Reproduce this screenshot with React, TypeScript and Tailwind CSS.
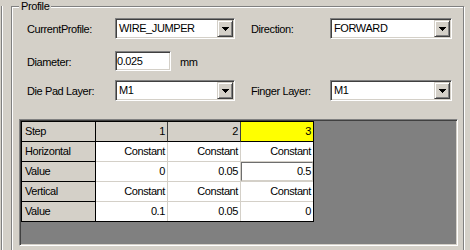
import React from "react";

const sunken =
  "border border-t-[#808080] border-l-[#808080] border-r-white border-b-white shadow-[inset_1px_1px_0_#404040,inset_-1px_-1px_0_#d4d0c8]";

function Arrow() {
  return (
    <svg width="7" height="4" viewBox="0 0 7 4" shapeRendering="crispEdges">
      <path d="M0 0h7v1H0zM1 1h5v1H1zM2 2h3v1H2zM3 3h1v1H3z" fill="#000" />
    </svg>
  );
}

function Combo({ value, width }: { value: string; width: string }) {
  return (
    <div className={`flex h-[21px] ${width} bg-white p-px ${sunken}`}>
      <span className="flex flex-1 items-center pl-[2px] leading-none">{value}</span>
      <div className="flex h-[17px] w-[16px] items-center justify-center border border-t-[#d4d0c8] border-l-[#d4d0c8] border-r-[#404040] border-b-[#404040] bg-[#d4d0c8] shadow-[inset_1px_1px_0_#ffffff,inset_-1px_-1px_0_#808080]">
        <Arrow />
      </div>
    </div>
  );
}

type Cell = { text: string; kind: "head" | "step" | "data" | "yellow" | "edit" };

const rows: Cell[][] = [
  [
    { text: "Step", kind: "head" },
    { text: "1", kind: "step" },
    { text: "2", kind: "step" },
    { text: "3", kind: "yellow" },
  ],
  [
    { text: "Horizontal", kind: "head" },
    { text: "Constant", kind: "data" },
    { text: "Constant", kind: "data" },
    { text: "Constant", kind: "data" },
  ],
  [
    { text: "Value", kind: "head" },
    { text: "0", kind: "data" },
    { text: "0.05", kind: "data" },
    { text: "0.5", kind: "edit" },
  ],
  [
    { text: "Vertical", kind: "head" },
    { text: "Constant", kind: "data" },
    { text: "Constant", kind: "data" },
    { text: "Constant", kind: "data" },
  ],
  [
    { text: "Value", kind: "head" },
    { text: "0.1", kind: "data" },
    { text: "0.05", kind: "data" },
    { text: "0", kind: "data" },
  ],
];

function TableCell({ cell, lastRow, lastCol, rowIdx }: { cell: Cell; lastRow: boolean; lastCol: boolean; rowIdx: number }) {
  const h = lastRow ? "h-[19px]" : "h-[20px] border-b";
  const r = lastCol ? "" : "border-r";
  if (cell.kind === "head") {
    return (
      <div className={`flex items-center bg-[#d4d0c8] pl-[3px] ${h} border-r border-black`}>
        {cell.text}
      </div>
    );
  }
  const isStep = rowIdx === 0;
  let bg = "bg-white";
  let colors = "border-r-[#d4d0c8] border-b-[#d4d0c8]";
  if (isStep) {
    bg = cell.kind === "yellow" ? "bg-[#ffff00]" : "bg-[#d4d0c8]";
    colors = "border-r-[#404040] border-b-black";
  }
  if (cell.kind === "edit") {
    return (
      <div className={`${h} ${r} ${colors} bg-white`}>
        <div className="flex h-full items-center justify-end border border-t-[#6e6e6e] border-l-[#6e6e6e] border-r-[#d4d0c8] border-b-[#d4d0c8] pr-px">
          {cell.text}
        </div>
      </div>
    );
  }
  return (
    <div className={`flex items-center justify-end pr-[2px] ${h} ${r} ${colors} ${bg}`}>{cell.text}</div>
  );
}

export default function App() {
  return (
    <div className="h-[250px] w-[470px] overflow-hidden bg-[#d4d0c8] pl-px font-['Liberation_Sans',Arial,sans-serif] text-[11px] tracking-[-0.4px] text-black">
      <div className="h-full border-l border-[#808080] shadow-[inset_1px_0_0_#ffffff]">
        <div className="relative ml-[9px] mt-[6px] h-[246px] w-[453px] border border-[#808080] shadow-[inset_1px_1px_0_#ffffff,1px_1px_0_#ffffff]">
          <span className="absolute left-[7px] top-[-8px] bg-[#d4d0c8] px-[2px] leading-[14px]">Profile</span>

          <div className="pl-[15px] pt-[11px]">
            <div className="flex h-[21px] items-center">
              <span className="w-[88px] pt-[2px]">CurrentProfile:</span>
              <Combo value="WIRE_JUMPER" width="w-[120px]" />
              <span className="ml-[16px] w-[79px] pt-[2px]">Direction:</span>
              <Combo value="FORWARD" width="w-[122px]" />
            </div>
            <div className="mt-[12px] flex h-[20px] items-center">
              <span className="w-[88px] pt-[2px]">Diameter:</span>
              <div className={`flex h-[20px] w-[56px] items-center bg-white p-px ${sunken}`}>
                <span className="leading-none">0.025</span>
              </div>
              <span className="ml-[9px] pt-[2px]">mm</span>
            </div>
            <div className="mt-[9px] flex h-[21px] items-center">
              <span className="w-[88px] pt-[2px]">Die Pad Layer:</span>
              <Combo value="M1" width="w-[120px]" />
              <span className="ml-[16px] w-[79px] pt-[2px]">Finger Layer:</span>
              <Combo value="M1" width="w-[122px]" />
            </div>
          </div>

          <div className={`ml-[7px] mt-[18px] h-[127px] w-[439px] bg-[#808080] p-px ${sunken}`}>
            <div className="grid w-[293px] grid-cols-[74px_72px_73px_72px] border border-black">
              {rows.map((row, ri) =>
                row.map((cell, ci) => (
                  <TableCell
                    key={`${ri}-${ci}`}
                    cell={cell}
                    rowIdx={ri}
                    lastRow={ri === rows.length - 1}
                    lastCol={ci === row.length - 1}
                  />
                ))
              )}
            </div>
          </div>
        </div>
      </div>
    </div>
  );
}
